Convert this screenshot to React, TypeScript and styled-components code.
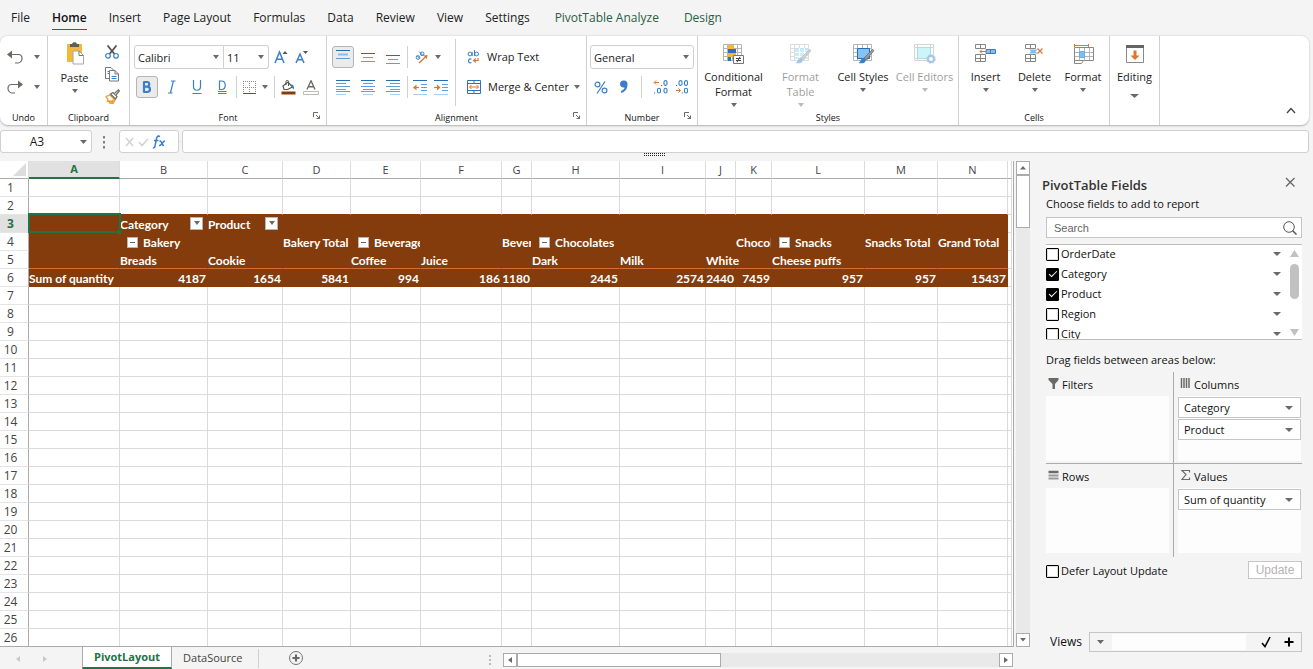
import React from "react";
import styled, { createGlobalStyle, css } from "styled-components";

const UI = '"Open Sans", "Noto Sans", sans-serif';
const BLUE = "#3a7fc8";
const ORANGE = "#dd7633";
const GRAY = "#6b6b66";
const GREEN = "#217346";
const BROWN = "#843c0c";
const LINE = "#d0d0d0";

const Global = createGlobalStyle`
  *, *::before, *::after { box-sizing: border-box; }
  body { margin: 0; background: #f4f4f4; overflow: hidden; }
  button, input, select { font-family: inherit; font-size: inherit; color: inherit; margin: 0; }
  button { padding: 0; border: 0; background: none; }
  svg { flex: none; }
`;

const Page = styled.div`
  display: flex;
  flex-direction: column;
  height: 100vh;
  font: 11px/16px ${UI};
  color: #1c1c1c;
  background: #f4f4f4;
`;

/* ---------- menu ---------- */
const Menu = styled.nav`
  display: flex;
  flex: none;
  height: 35px;
  padding: 7px 0 5px 11px;
  gap: 22px;
`;
const MenuLink = styled.a<{ $active?: boolean; $context?: boolean }>`
  font-size: 12px;
  line-height: 21px;
  height: 23px;
  white-space: nowrap;
  text-decoration: none;
  color: ${(p) => (p.$context ? "#29603f" : "#222")};
  ${(p) => p.$context && "margin-left: 3px;"}
  ${(p) => p.$active && css`font-weight: 600; border-bottom: 1px solid ${GREEN}; color: #111;`}
`;

/* ---------- ribbon ---------- */
const RibbonBar = styled.section`
  display: flex;
  flex: none;
  height: 90px;
  margin-right: 4px;
  background: #fff;
  border-top: 1px solid #e6e6e6;
  border-radius: 8px;
  box-shadow: 0 1px 2px rgba(0, 0, 0, 0.28);
`;
const GroupBox = styled.div<{ $w: number }>`
  display: flex;
  flex: none;
  flex-direction: column;
  width: ${(p) => p.$w}px;
  border-right: 1px solid ${LINE};
`;
const GroupBody = styled.div`
  display: flex;
  height: 74px;
`;
const GroupFoot = styled.div`
  display: grid;
  grid-template-columns: 1fr auto 1fr;
  height: 15px;
  font-size: 9px;
  line-height: 15px;
  color: #111;
`;
const Launcher = styled.button`
  grid-column: 3;
  justify-self: end;
  width: 12px;
  height: 12px;
  margin-right: 3px;
  line-height: 0;
`;
const Rows = styled.div<{ $pad?: number }>`
  display: flex;
  flex-direction: column;
  gap: 6px;
  padding: 9px 0 0 ${(p) => p.$pad ?? 0}px;
`;
const ToolRow = styled.div<{ $pad?: number }>`
  display: flex;
  align-items: center;
  height: 24px;
  gap: 3px;
  padding-left: ${(p) => p.$pad ?? 0}px;
`;
const Tool = styled.button<{ $w?: number; $on?: boolean; $gap?: number }>`
  display: flex;
  align-items: center;
  justify-content: center;
  gap: ${(p) => p.$gap ?? 5}px;
  flex: none;
  width: ${(p) => p.$w ?? 22}px;
  height: 22px;
  border: 1px solid ${(p) => (p.$on ? "#b5b5b5" : "transparent")};
  border-radius: 3px;
  background: ${(p) => (p.$on ? "#ebebeb" : "none")};
`;
const TextTool = styled.button`
  display: flex;
  align-items: center;
  gap: 7px;
  height: 22px;
  white-space: nowrap;
  & > span { margin-bottom: 1px; }
  & > svg:last-child:not(:first-child) { margin-left: -2px; }
`;
const Sep = styled.i<{ $h?: number; $m?: string }>`
  flex: none;
  width: 1px;
  height: ${(p) => p.$h ?? 22}px;
  margin: ${(p) => p.$m ?? 0};
  background: ${LINE};
`;
const Big = styled.button<{ $w: number; $off?: boolean; $push?: number; $top?: number }>`
  display: flex;
  flex: none;
  flex-direction: column;
  align-items: center;
  width: ${(p) => p.$w}px;
  padding-top: ${(p) => p.$top ?? 8}px;
  opacity: ${(p) => (p.$off ? 0.45 : 1)};
  line-height: 15px;
  & > span { margin: 5px 0 ${(p) => p.$push ?? 4}px; }
`;
const ClipCol = styled.div`
  display: flex;
  flex-direction: column;
  width: 24px;
  padding-top: 5px;
`;
const SelectBox = styled.div<{ $w: number; $side?: "l" | "r" }>`
  display: grid;
  width: ${(p) => p.$w}px;
  height: 24px;
  background: #fff;
  border: 1px solid #cfcfcf;
  border-radius: ${(p) => (p.$side === "l" ? "3px 0 0 3px" : p.$side === "r" ? "0 3px 3px 0" : "3px")};
  ${(p) => p.$side === "r" && "border-left: 0;"}
  & > * { grid-area: 1 / 1; }
  & > svg { place-self: center end; margin-right: 4px; pointer-events: none; }
`;
const Select = styled.select`
  appearance: none;
  width: 100%;
  border: 0;
  padding: 0 3px;
  background: transparent;
`;
const FontCombo = styled.div`
  display: flex;
`;
const Collapse = styled.button`
  align-self: flex-end;
  width: 20px;
  height: 24px;
  margin: 0 8px 4px auto;
`;

/* ---------- formula bar ---------- */
const FormulaRow = styled.div`
  display: flex;
  flex: none;
  align-items: center;
  height: 36px;
  padding: 0 4px 3px 0;
`;
const Framed = styled.div<{ $w?: number }>`
  display: flex;
  align-items: center;
  justify-content: space-between;
  flex: ${(p) => (p.$w ? "none" : "1")};
  width: ${(p) => (p.$w ? `${p.$w}px` : "auto")};
  height: 23px;
  background: #fff;
  border: 1px solid ${LINE};
  border-radius: 3px;
`;
const NameInput = styled.input`
  width: 72px;
  border: 0;
  background: none;
  text-align: center;
  font-size: 12px;
`;
const NameArrow = styled.span`
  display: flex;
  margin-right: 4px;
`;
const FormulaInput = styled.input`
  width: 100%;
  height: 100%;
  border: 0;
  background: none;
`;
const Splitter = styled.div`
  position: absolute;
  top: 153px;
  left: calc(50% - 13px);
  width: 21px;
  height: 4px;
  line-height: 0;
`;

/* ---------- work area ---------- */
const Main = styled.main`
  display: flex;
  flex: 1;
  min-height: 0;
`;
const Left = styled.div`
  display: flex;
  flex-direction: column;
  flex: 1;
  min-width: 0;
`;
const SheetRow = styled.div`
  display: flex;
  flex: 1;
  min-height: 0;
  gap: 2px;
`;
const Sheet = styled.div`
  flex: 1;
  min-width: 0;
  overflow: hidden;
  background: #fff;
  border-right: 1px solid #aaa;
  border-bottom: 1px solid #aaa;
  padding-right: 1px;
`;
const Grid = styled.table`
  table-layout: fixed;
  width: 100%;
  border-spacing: 0;
  border-collapse: separate;
`;
const ColHead = styled.th<{ $on?: boolean }>`
  height: 18px;
  padding: 0;
  font: ${(p) => (p.$on ? 700 : 400)} 11px/16px ${UI};
  color: ${(p) => (p.$on ? GREEN : "#444")};
  background: ${(p) => (p.$on ? "#e1e1e1" : "#fff")};
  border-right: 1px solid #dcdcdc;
  border-bottom: ${(p) => (p.$on ? `2px solid ${GREEN}` : "1px solid #ababab")};
`;
const RowHead = styled.th<{ $on?: boolean }>`
  height: 18px;
  padding: 1px 7px 0 0;
  font: ${(p) => (p.$on ? 700 : 400)} 12px/16px ${UI};
  color: ${(p) => (p.$on ? GREEN : "#444")};
  background: ${(p) => (p.$on ? "#e1e1e1" : "#fff")};
  border-right: 1px solid #ababab;
  border-bottom: 1px solid #e4e4e4;
`;
const Corner = styled.th`
  height: 18px;
  padding: 0 2px 2px 0;
  line-height: 0;
  text-align: right;
  vertical-align: bottom;
  border-right: 1px solid #dcdcdc;
  border-bottom: 1px solid #ababab;
`;
const Cell = styled.td<{ $pivot?: boolean; $above?: boolean; $rule?: boolean; $selected?: boolean }>`
  height: 18px;
  padding: 0;
  border-right: 1px solid #dadada;
  border-bottom: 1px solid #dadada;
  ${(p) => p.$selected && "position: relative;"}
  ${(p) => p.$above && `border-bottom-color: ${BROWN};`}
  ${(p) =>
    p.$pivot &&
    css`
      background: ${BROWN};
      color: #fff;
      border-color: ${BROWN};
      border-bottom-color: ${p.$rule ? "#d3702f" : BROWN};
      font: 700 12px/17px Lato, sans-serif;
    `}
`;
const CellText = styled.div<{ $right?: boolean; $clip?: boolean; $spread?: boolean }>`
  display: flex;
  align-items: center;
  height: 17px;
  padding: 2px 1px 0 0;
  white-space: nowrap;
  justify-content: ${(p) => (p.$right ? "flex-end" : p.$spread ? "space-between" : "flex-start")};
  overflow: ${(p) => (p.$clip ? "hidden" : "visible")};
`;
const FilterBtn = styled.button`
  display: flex;
  align-items: center;
  justify-content: center;
  flex: none;
  width: 13px;
  height: 13px;
  margin: 0 3px 3px 0;
  background: #fff;
  border: 1px solid #b5b5b5;
`;
const Toggle = styled.button`
  flex: none;
  width: 11px;
  height: 11px;
  margin: 0 5px 0 7px;
  background: #fff;
  border: 1px solid #b5b5b5;
  line-height: 0;
`;
const Selection = styled.div`
  position: absolute;
  inset: -2px -2px -1px -1px;
  border: 2px solid ${GREEN};
  z-index: 1;
  &::after {
    content: "";
    position: absolute;
    right: -2px;
    bottom: -3px;
    width: 5px;
    height: 5px;
    background: ${GREEN};
    border: solid ${BROWN};
    border-width: 1px 0 0 1px;
  }
`;

const Bar = styled.div<{ $vertical?: boolean }>`
  display: flex;
  flex: none;
  flex-direction: ${(p) => (p.$vertical ? "column" : "row")};
  justify-content: space-between;
  background: #e9e9e9;
  ${(p) => (p.$vertical ? "width: 14px;" : "width: 510px; height: 14px;")}
`;
const BarStart = styled.div<{ $vertical?: boolean }>`
  display: flex;
  flex-direction: ${(p) => (p.$vertical ? "column" : "row")};
`;
const BarBtn = styled.button`
  display: flex;
  align-items: center;
  justify-content: center;
  width: 14px;
  height: 14px;
  background: #fff;
  border: 1px solid #ababab;
`;
const Thumb = styled.div<{ $vertical?: boolean }>`
  ${(p) => (p.$vertical ? "width: 14px; height: 53px;" : "width: 204px; height: 14px;")}
  background: #fff;
  border: 1px solid #ababab;
`;

const TabStrip = styled.div`
  display: flex;
  flex: none;
  height: 22px;
  padding-right: 17px;
`;
const TabNav = styled.div`
  display: flex;
  gap: 21px;
  width: 82px;
  padding: 9px 0 0 15px;
`;
const SheetTab = styled.button<{ $on?: boolean }>`
  height: 22px;
  padding: 0 11px;
  font-size: 11px;
  line-height: 20px;
  color: #444;
  ${(p) =>
    p.$on &&
    css`
      font-weight: 700;
      color: ${GREEN};
      background: #fff;
      border: solid #ababab;
      border-width: 0 1px;
      border-bottom: 2px solid ${GREEN};
    `}
`;
const AddSheet = styled.button`
  width: 16px;
  height: 22px;
  padding-top: 3px;
  margin-left: 29px;
`;
const Grip = styled.div`
  margin: 8px 11px 0 auto;
  line-height: 0;
`;
const HBarWrap = styled.div`
  padding-top: 6px;
`;

/* ---------- field panel ---------- */
const Panel = styled.aside`
  display: flex;
  flex: none;
  flex-direction: column;
  width: 283px;
  padding: 14px 11px 17px 16px;
  color: #111;
`;
const PanelHead = styled.header`
  display: flex;
  justify-content: space-between;
  padding-right: 7px;
  margin-left: -4px;
`;
const PanelTitle = styled.h2`
  margin: 0;
  font-size: 13px;
  line-height: 21px;
  font-weight: 600;
  color: #333;
`;
const Note = styled.p<{ $top?: number }>`
  margin: ${(p) => p.$top ?? 0}px 0 0;
  line-height: 16px;
`;
const SearchBox = styled.label`
  display: flex;
  align-items: center;
  justify-content: space-between;
  height: 21px;
  margin: 5px 0 6px;
  padding: 0 4px 0 7px;
  background: #fff;
  border: 1px solid #c6c6c6;
`;
const SearchInput = styled.input`
  flex: 1;
  min-width: 0;
  padding: 0;
  border: 0;
  outline: 0;
  background: none;
  font: 11px/16px "Liberation Sans", sans-serif;
  &::placeholder { color: #666; opacity: 1; }
`;
const FieldBox = styled.div`
  display: flex;
  height: 96px;
  background: #fff;
  border: solid #bdbdbd;
  border-width: 1px 0;
`;
const FieldList = styled.ul`
  flex: 1;
  margin: 0;
  padding: 0;
  list-style: none;
  overflow: hidden;
`;
const Field = styled.li`
  display: flex;
  align-items: center;
  justify-content: space-between;
  height: 20px;
  padding: 0 6px 2px 0;
`;
const CheckLabel = styled.label`
  display: flex;
  align-items: center;
  gap: 2px;
`;
const Check = styled.input`
  appearance: none;
  display: grid;
  place-items: center;
  width: 13px;
  height: 13px;
  border: 1px solid #000;
  box-shadow: inset 0 0 0 1px #ddd;
  border-radius: 1px;
  background: #fff;
  &:checked { background: #000; box-shadow: none; }
  &:checked::after {
    content: "";
    width: 8px;
    height: 4px;
    border: solid #fff;
    border-width: 0 0 1px 1px;
    transform: translateY(-1px) rotate(-45deg);
  }
`;
const ListBar = styled.div`
  display: flex;
  flex-direction: column;
  align-items: center;
  justify-content: space-between;
  width: 15px;
  padding: 5px 0 3px;
`;
const ListThumb = styled.div`
  width: 9px;
  height: 35px;
  margin-bottom: 24px;
  border-radius: 5px;
  background: #c1c1c1;
`;
const Areas = styled.div`
  display: grid;
  grid-template-columns: 1fr 1fr;
  margin-top: 4px;
`;
const Area = styled.section<{ $right?: boolean; $bottom?: boolean }>`
  padding: 4px ${(p) => (p.$right ? 1 : 4)}px ${(p) => (p.$bottom ? 4 : 2)}px ${(p) => (p.$right ? 4 : 0)}px;
  ${(p) => !p.$right && "border-right: 1px solid #ababab;"}
  ${(p) => !p.$bottom && "border-bottom: 1px solid #ababab;"}
`;
const AreaHead = styled.h3`
  display: flex;
  gap: 3px;
  height: 20px;
  margin: 0;
  padding-left: 2px;
  font-size: 11px;
  line-height: 17px;
  font-weight: 400;
`;
const Drop = styled.div`
  display: flex;
  flex-direction: column;
  gap: 1px;
  height: 65px;
  padding-top: 1px;
  background: #fdfdfd;
`;
const Chip = styled.button`
  display: flex;
  align-items: center;
  justify-content: space-between;
  height: 21px;
  padding: 0 7px 0 5px;
  background: #fff;
  border: 1px solid #c6c6c6;
`;
const DeferRow = styled.div`
  display: flex;
  align-items: flex-start;
  justify-content: space-between;
  padding-top: 4px;
  & > label { height: 20px; }
`;
const Update = styled.button`
  width: 54px;
  height: 18px;
  border: 1px solid #c6c6c6;
  background: #fff;
  color: #b4b4b4;
  font: 12px/14px "Liberation Sans", sans-serif;
`;
const ViewsRow = styled.div`
  display: flex;
  align-items: center;
  gap: 7px;
  margin-top: auto;
  padding-left: 4px;
  font-size: 12px;
`;
const ViewsBox = styled.div`
  display: flex;
  align-items: center;
  flex: 1;
  min-width: 0;
  height: 20px;
  border: 1px solid #c6c6c6;
`;
const ViewsInput = styled.input`
  flex: 1;
  width: 0;
  height: 16px;
  margin-right: 9px;
  border: 0;
  background: #fdfdfd;
`;

/* ---------- icons ---------- */
type IconProps = { w?: number; h?: number; children: React.ReactNode };
const Icon = ({ w = 16, h = w, children }: IconProps) => (
  <svg width={w} height={h} viewBox={`0 0 ${w} ${h}`} fill="none" aria-hidden="true">{children}</svg>
);
const Down = ({ w = 6, c = GRAY }: { w?: number; c?: string }) => (
  <Icon w={w} h={4}><path d={`M0 0H${w}L${w / 2} 4Z`} fill={c} /></Icon>
);
const Bars = ({ y, side, block }: { y: number[]; side?: "l" | "c" | "r"; block?: boolean }) => (
  <Icon w={14} h={16}>
    {y.map((v, i) => {
      const short = i % 2 === 1;
      const a = short ? (side === "l" ? 0 : side === "r" ? 4 : 2) : 0;
      const b = short ? (side === "l" ? 10 : side === "r" ? 14 : 12) : 14;
      const wide = block && short;
      return (
        <path
          key={v}
          d={`M${a} ${v + 0.5}H${b}`}
          strokeWidth={wide ? 2 : 1}
          stroke={wide ? "#8cbdec" : i === 0 ? "#1f6fb5" : i === 5 ? "#a9cdef" : "#5d9edb"}
        />
      );
    })}
  </Icon>
);
const UndoIcon = ({ flip }: { flip?: boolean }) => (
  <Icon w={16} h={14}>
    <g transform={flip ? "matrix(-1 0 0 1 16 0)" : undefined}>
      <path d="M2 4.500H11.500C14 4.500 15 6.500 15 8.500S13.500 13 11 13H8" stroke={GRAY} strokeWidth="1.200" />
      <path d="M0 4.500L5 0.500V8.500Z" fill={GRAY} />
    </g>
  </Icon>
);
const PasteIcon = () => (
  <Icon w={20} h={24}>
    <path d="M2 3H17V21H2Z" fill="#f3b73b" />
    <path d="M5 5V3H7C7.500 0.500 11.500 0.500 12 3H14V6H5Z" fill="#5f5f5a" />
    <path d="M8 10H14L18.500 14.500V23H8Z" fill="#fff" stroke="#a6a6a6" />
    <path d="M14 10V14.500H18.500" stroke="#777" />
  </Icon>
);
const CutIcon = () => (
  <Icon w={14} h={14}>
    <path d="M2.500 0.500L9.500 9M11.500 0.500L4.500 9" stroke="#55554f" strokeWidth="1.800" />
    <circle cx="3" cy="10.800" r="2.300" stroke={BLUE} strokeWidth="1.200" />
    <circle cx="11" cy="10.800" r="2.300" stroke={BLUE} strokeWidth="1.200" />
  </Icon>
);
const CopyIcon = () => (
  <Icon w={14} h={15}>
    <path d="M4 11.500H0.500V0.500H6L8.500 3" stroke="#777" />
    <path d="M4.500 3.500H10L13.500 7V14H4.500Z" fill="#fff" stroke="#777" />
    <path d="M10 3.500V7H13.500" stroke="#777" />
    <path d="M6.500 9.500H11.500M6.500 11.500H11.500M2.500 4.500H4M2.500 6.500H4" stroke={BLUE} />
  </Icon>
);
const PainterIcon = () => (
  <Icon w={15} h={15}>
    <path d="M1 7.500L5 6L10 11L8 14.500L4.500 14L5 12L2.500 12.500L3 10.500Z" fill="#fff" stroke="#eb9a2d" strokeWidth="1.300" />
    <path d="M4 13L9 10L8 14Z" fill="#eb9a2d" />
    <path d="M5.500 5L8 3.500L12 7.500L10.500 10Z" fill="#fff" stroke={GRAY} strokeWidth="1.200" />
    <path d="M9.500 4.500L13.500 0.800L14.500 2L11 6" fill="#fff" stroke={GRAY} strokeWidth="1.200" />
  </Icon>
);
const GrowIcon = ({ down }: { down?: boolean }) => (
  <Icon w={14} h={14}>
    <path d={down ? "M1 13L5 4L9 13M2.500 9.800H7.500" : "M1 13L5.500 2L10 13M2.500 9.300H8.500"} stroke={BLUE} strokeWidth="1.500" />
    <path d={down ? "M8 1H13L10.500 4Z" : "M8.500 4H13.500L11 1Z"} fill="#55554f" />
  </Icon>
);
const BoldIcon = () => (
  <Icon w={12} h={14}><path d="M2.500 2H6C9 2 9 6.700 6 6.700H2.500M6 6.700C10 6.700 10 12 6 12H2.500M3 1.500V12.500" stroke={BLUE} strokeWidth="2.200" /></Icon>
);
const ItalicIcon = () => (
  <Icon w={10} h={14}><path d="M4 1H8.500M1 13H5.500M6.400 1L3.400 13" stroke={BLUE} strokeWidth="1.200" /></Icon>
);
const UnderIcon = () => (
  <Icon w={12} h={14}><path d="M2.500 0V6.500C2.500 11.500 9.500 11.500 9.500 6.500V0M1.500 13.500H10.500" stroke={BLUE} strokeWidth="1.200" /></Icon>
);
const DoubleIcon = () => (
  <Icon w={12} h={15}><path d="M3.500 1V9.500H5.500C10.500 9.500 10.500 1 5.500 1ZM2 11.500H10.500M2 13.500H10.500" stroke={BLUE} strokeWidth="1.200" /></Icon>
);
const BorderIcon = () => (
  <Icon w={13} h={13}>
    <path d="M0.500 0V11M6.500 0V11M12.500 0V11M0 0.500H13M0 6.500H13" stroke="#8a8a86" strokeDasharray="1 1" />
    <path d="M0 12.500H13" stroke="#55554f" />
  </Icon>
);
const FillIcon = () => (
  <Icon w={15} h={15}>
    <path d="M2 6L7 2L11.500 7L6.500 9.500L3 9.500Z" stroke="#55554f" strokeWidth="1.200" />
    <path d="M5 5V1.500C5 0 7.500 0 7.500 1.500V6" stroke="#55554f" />
    <path d="M9.500 4.500C12 4 13.500 6 13 9.500L11.300 8Z" fill={BLUE} />
    <path d="M0.500 11.500H14.500V14.500H0.500Z" fill={BROWN} />
  </Icon>
);
const ColorIcon = () => (
  <Icon w={16} h={15}>
    <path d="M4 9.500L8 0.800L12 9.500M5.300 6.700H10.700" stroke={GRAY} strokeWidth="1.400" />
    <path d="M0.500 11.500H15.500V14.500H0.500Z" fill="#fff" stroke="#bbb" />
  </Icon>
);
const OrientIcon = () => (
  <Icon w={13} h={13}>
    <circle cx="3" cy="6.500" r="1.800" stroke={BLUE} />
    <path d="M2 4.500L5 7.800M4 0.500L8.500 5" stroke={BLUE} />
    <circle cx="7.200" cy="2.800" r="1.800" stroke={BLUE} />
    <path d="M4 12L11.500 5" stroke={ORANGE} strokeWidth="1.300" />
    <path d="M8.500 4.500L12.500 4L12 8Z" fill={ORANGE} />
  </Icon>
);
const IndentIcon = ({ right }: { right?: boolean }) => (
  <Icon w={14} h={16}>
    <path d="M0 1.500H14" stroke="#1f6fb5" />
    <path d="M8 5.500H14M8 8.500H14M8 11.500H14" stroke="#5d9edb" />
    <path d="M0 15.500H14" stroke="#a9cdef" />
    <path d={right ? "M0 8.500H4" : "M2 8.500H6"} stroke={ORANGE} strokeWidth="1.200" />
    <path d={right ? "M3 5.500L6.500 8.500L3 11.500Z" : "M3.500 5.500L0 8.500L3.500 11.500Z"} fill={ORANGE} />
  </Icon>
);
const WrapIcon = () => (
  <Icon w={13} h={14}>
    <circle cx="3" cy="4" r="1.900" stroke={BLUE} /><path d="M5.200 2V6" stroke={BLUE} />
    <path d="M7.500 0V6" stroke={BLUE} /><circle cx="9.600" cy="4" r="1.900" stroke={BLUE} />
    <path d="M4.500 9.200C0.500 7.500 0.500 14.300 4.500 12.500" stroke={BLUE} strokeWidth="1.200" />
    <path d="M11 8V10.500H7M9 8.500L6.500 10.500L9 12.500" stroke={ORANGE} strokeWidth="1.200" />
  </Icon>
);
const MergeIcon = () => (
  <Icon w={14} h={14}>
    <path d="M0.500 0.500H13.500V13.500H0.500ZM0 3.500H14M0 10.500H14M7 0V3M7 11V14" stroke="#2c72b4" />
    <path d="M2.500 7H11.500M4.500 5L2.500 7L4.500 9M9.500 5L11.500 7L9.500 9" stroke={ORANGE} />
  </Icon>
);
const PercentIcon = () => (
  <Icon w={14} h={13}>
    <circle cx="3.500" cy="3.500" r="2.400" stroke={BLUE} strokeWidth="1.200" /><circle cx="10.500" cy="9.500" r="2.400" stroke={BLUE} strokeWidth="1.200" />
    <path d="M11 0.500L3 12.500" stroke={BLUE} strokeWidth="1.200" />
  </Icon>
);
const CommaIcon = () => (
  <Icon w={10} h={14}><path d="M1 4A3.700 3.700 0 1 1 8.500 4.500C8.500 9 6 12 2 13V11C4.500 10 5.500 8.700 5.500 7.500C3 8 1 6.500 1 4Z" fill={BLUE} /></Icon>
);
const DecimalIcon = ({ less }: { less?: boolean }) => (
  <Icon w={15} h={14}>
    <g stroke={BLUE} strokeWidth="1.100">
      {less ? (
        <><rect x="4" y="0.600" width="3" height="4.800" rx="1.500" /><rect x="9.500" y="0.600" width="3" height="4.800" rx="1.500" /><rect x="9.500" y="8.200" width="3" height="4.800" rx="1.500" /><path d="M1 5.500H2.200M6.700 13H7.900" /></>
      ) : (
        <><rect x="11" y="0.600" width="3" height="4.800" rx="1.500" /><rect x="4.500" y="8.200" width="3" height="4.800" rx="1.500" /><rect x="11" y="8.200" width="3" height="4.800" rx="1.500" /><path d="M8 5.500H9.200M1 13H2.200" /></>
      )}
    </g>
    <path d={less ? "M1 10.500H5M3.500 8.500L5.500 10.500L3.500 12.500" : "M1.500 2.500H6M3 0.500L1 2.500L3 4.500"} stroke={ORANGE} />
  </Icon>
);
const Lattice = () => (
  <path d="M0.500 0.500H18.500V16.500H0.500ZM0 4.500H19M0 8.500H19M0 12.500H19M4.500 0V17M9.500 0V17M14.500 0V17" stroke="#b4b4b1" />
);
const Brush = () => (
  <>
    <path d="M11 14L19.500 5.500L21 6.500L13 16Z" fill="#9a9a96" stroke={GRAY} strokeWidth="0.800" />
    <path d="M5.500 19C8 18 7.500 14.500 10.500 14C13 14 13.500 17 11.500 18.500C10 19.500 7.500 19.500 5.500 19Z" fill={BLUE} />
  </>
);
const ConditionalIcon = () => (
  <Icon w={21} h={20}>
    <Lattice />
    <path d="M5 1H11V5H5ZM5 9H13V13H5Z" fill="#f3b73b" /><path d="M5 5H13V9H5ZM5 13H8V17H5Z" fill="#2c72b4" />
    <path d="M10.500 11.500H20.500V19.500H10.500Z" fill="#fff" stroke="#777" />
    <path d="M13 14.500H18M13 16.500H18M17 12.800L14 18.200" stroke="#444" />
  </Icon>
);
const FormatTableIcon = () => (
  <Icon w={21} h={20}><Lattice /><path d="M5 4H18V15H5Z" fill="#5cc7ee" opacity="0.700" /><path d="M5 8.500H18M5 12.500H18M9.500 4V15M14.500 4V15" stroke="#fff" /><Brush /></Icon>
);
const CellStylesIcon = () => (
  <Icon w={21} h={20}><Lattice /><path d="M4.500 4.500H16.500V14.500H4.500Z" fill="#83c3f7" stroke="#1f6fb5" /><Brush /></Icon>
);
const CellEditorsIcon = () => (
  <Icon w={22} h={20}>
    <path d="M0.500 0.500H19.500V16.500H0.500ZM0 3.500H20M0 14.500H20M3.500 0V17M16.500 0V17" stroke="#a3a3a0" />
    <path d="M3.500 3.500H16.500V14.500H3.500Z" fill="#8de9f2" stroke="#4ab8cc" />
    <circle cx="17" cy="15" r="3" fill="#fff" stroke={BLUE} strokeWidth="2" /><circle cx="17" cy="15" r="4.300" stroke={BLUE} strokeDasharray="1.700 1.700" />
  </Icon>
);
const CellsBase = () => (
  <path d="M0.500 0.500H10.500V4.500H0.500ZM5.500 0V5M0.500 10.500H10.500V17.500H0.500ZM5.500 10V18M0 14.500H11" stroke="#858581" />
);
const InsertIcon = () => (
  <Icon w={21} h={20}>
    <CellsBase />
    <path d="M11 5.500H20.500V9.500H11ZM15.500 5.500V9.500" fill="#7dbff5" stroke={BLUE} />
    <path d="M5 7.500H11M7 5.500L5 7.500L7 9.500" stroke={ORANGE} />
  </Icon>
);
const DeleteIcon = () => (
  <Icon w={19} h={20}>
    <CellsBase />
    <path d="M4 5.500H13L10.500 7.500L13 9.500H4L6 7.500Z" fill="#7dbff5" />
    <path d="M12.500 4.500L17.500 9.500M17.500 4.500L12.500 9.500" stroke={ORANGE} strokeWidth="1.200" />
  </Icon>
);
const FormatIcon = () => (
  <Icon w={21} h={20}>
    <path d="M1 1.500H16M1.500 0V3M15.500 0V3" stroke={ORANGE} />
    <path d="M6.500 4V17M11.500 4V17M16.500 4V17M1 8.500H21M1 12.500H21" stroke="#b4b4b1" />
    <path d="M1.500 3.500H20.500V16.500H10.500L8.500 19.500H1.500ZM1 16.500H10" stroke="#888884" />
    <path d="M6.500 7.500H11.500V13.500H6.500Z" fill="#7dbff5" stroke="#65aeea" />
  </Icon>
);
const EditingIcon = () => (
  <Icon w={18} h={20}>
    <path d="M0.500 1.500H17.500V18.500H0.500Z" stroke="#8a8a86" /><path d="M0 1H18V4H0Z" fill="#66665f" />
    <path d="M7.500 6.500H10.500V11.500H13.500L9 16L4.500 11.500H7.500Z" fill={ORANGE} />
  </Icon>
);
const LauncherIcon = () => (
  <Icon w={8} h={8}><path d="M0.500 5V0.500H5M3 3L6.500 6.500M6.500 3.500V6.500H3.500" stroke={GRAY} /></Icon>
);

/* ---------- data ---------- */
const menu = ["File", "Home", "Insert", "Page Layout", "Formulas", "Data", "Review", "View", "Settings", "PivotTable Analyze", "Design"];
const cols: [string, number][] = [
  ["A", 91], ["B", 88], ["C", 75], ["D", 68], ["E", 70], ["F", 81], ["G", 30],
  ["H", 88], ["I", 86], ["J", 30], ["K", 36], ["L", 93], ["M", 73], ["N", 70],
];
type Item = { t: string; kind?: "filter" | "toggle" | "num" | "clip" };
const pivot: Record<number, Record<string, Item>> = {
  3: { B: { t: "Category", kind: "filter" }, C: { t: "Product", kind: "filter" } },
  4: {
    B: { t: "Bakery", kind: "toggle" }, D: { t: "Bakery Total", kind: "clip" }, E: { t: "Beverages", kind: "toggle" },
    G: { t: "Bever", kind: "clip" }, H: { t: "Chocolates", kind: "toggle" }, K: { t: "Chocol", kind: "clip" },
    L: { t: "Snacks", kind: "toggle" }, M: { t: "Snacks Total" }, N: { t: "Grand Total" },
  },
  5: { B: { t: "Breads" }, C: { t: "Cookie" }, E: { t: "Coffee" }, F: { t: "Juice" }, H: { t: "Dark" }, I: { t: "Milk" }, J: { t: "White" }, L: { t: "Cheese puffs" } },
  6: { A: { t: "Sum of quantity" } },
};
["4187", "1654", "5841", "994", "186", "1180", "2445", "2574", "2440", "7459", "957", "957", "15437"].forEach((t, i) => {
  pivot[6][cols[i + 1][0]] = { t, kind: "num" };
});
const fields: [string, boolean][] = [["OrderDate", false], ["Category", true], ["Product", true], ["Region", false], ["City", false]];

/* ---------- parts ---------- */
const Group = ({ w, label, launch, children }: { w: number; label?: string; launch?: boolean; children: React.ReactNode }) => (
  <GroupBox $w={w}>
    <GroupBody>{children}</GroupBody>
    <GroupFoot>
      <span />
      <span>{label}</span>
      {launch && <Launcher aria-label={`${label} settings`}><LauncherIcon /></Launcher>}
    </GroupFoot>
  </GroupBox>
);

const Ribbon = () => (
  <RibbonBar>
    <Group w={48} label="Undo">
      <Rows $pad={5}>
        <ToolRow><Tool $w={36} $gap={11} aria-label="Undo"><UndoIcon /><Down /></Tool></ToolRow>
        <ToolRow><Tool $w={36} $gap={11} aria-label="Redo"><UndoIcon flip /><Down /></Tool></ToolRow>
      </Rows>
    </Group>
    <Group w={82} label="Clipboard">
      <Big $w={53} $top={5}><PasteIcon /><span>Paste</span><Down /></Big>
      <ClipCol>
        <Tool aria-label="Cut"><CutIcon /></Tool>
        <Tool aria-label="Copy"><CopyIcon /></Tool>
        <Tool aria-label="Format painter"><PainterIcon /></Tool>
      </ClipCol>
    </Group>
    <Group w={197} label="Font" launch>
      <Rows $pad={4}>
        <ToolRow>
          <FontCombo>
            <SelectBox $w={90} $side="l"><Select aria-label="Font name"><option>Calibri</option></Select><Down /></SelectBox>
            <SelectBox $w={45} $side="r"><Select aria-label="Font size"><option>11</option></Select><Down /></SelectBox>
          </FontCombo>
          <Tool $w={18} aria-label="Increase font size"><GrowIcon /></Tool>
          <Tool $w={18} aria-label="Decrease font size"><GrowIcon down /></Tool>
        </ToolRow>
        <ToolRow $pad={2}>
          <Tool $on aria-label="Bold"><BoldIcon /></Tool>
          <Tool aria-label="Italic"><ItalicIcon /></Tool>
          <Tool aria-label="Underline"><UnderIcon /></Tool>
          <Tool aria-label="Double underline"><DoubleIcon /></Tool>
          <Sep />
          <Tool $w={31} $gap={6} aria-label="Borders"><BorderIcon /><Down /></Tool>
          <Sep />
          <Tool $w={20} aria-label="Fill color"><FillIcon /></Tool>
          <Tool $w={20} aria-label="Font color"><ColorIcon /></Tool>
        </ToolRow>
      </Rows>
    </Group>
    <Group w={260} label="Alignment" launch>
      <Rows $pad={5}>
        <ToolRow>
          <Tool $on aria-label="Top align"><Bars block y={[1, 5, 9]} /></Tool>
          <Tool aria-label="Middle align"><Bars y={[4, 8, 12]} /></Tool>
          <Tool aria-label="Bottom align"><Bars y={[6, 10, 14]} /></Tool>
          <Sep />
          <Tool $w={34} $gap={7} aria-label="Orientation"><OrientIcon /><Down /></Tool>
        </ToolRow>
        <ToolRow>
          <Tool aria-label="Align left"><Bars side="l" y={[1, 4, 7, 10, 12, 15]} /></Tool>
          <Tool aria-label="Align center"><Bars side="c" y={[1, 4, 7, 10, 12, 15]} /></Tool>
          <Tool aria-label="Align right"><Bars side="r" y={[1, 4, 7, 10, 12, 15]} /></Tool>
          <Sep />
          <Tool $w={18} aria-label="Decrease indent"><IndentIcon /></Tool>
          <Tool $w={18} aria-label="Increase indent"><IndentIcon right /></Tool>
        </ToolRow>
      </Rows>
      <Sep $h={67} $m="3px 0 0 5px" />
      <Rows $pad={11}>
        <ToolRow><TextTool><WrapIcon /><span>Wrap Text</span></TextTool></ToolRow>
        <ToolRow><TextTool><MergeIcon /><span>Merge &amp; Center</span><Down /></TextTool></ToolRow>
      </Rows>
    </Group>
    <Group w={111} label="Number" launch>
      <Rows $pad={3}>
        <SelectBox $w={104}><Select aria-label="Number format"><option>General</option></Select><Down /></SelectBox>
        <ToolRow>
          <Tool $w={22} aria-label="Percent"><PercentIcon /></Tool>
          <Tool $w={18} aria-label="Comma"><CommaIcon /></Tool>
          <Sep $m="0 5px" />
          <Tool $w={20} aria-label="Increase decimals"><DecimalIcon /></Tool>
          <Tool $w={18} aria-label="Decrease decimals"><DecimalIcon less /></Tool>
        </ToolRow>
      </Rows>
    </Group>
    <Group w={261} label="Styles">
      <Big $w={71}><ConditionalIcon /><span>Conditional<br />Format</span><Down /></Big>
      <Big $w={63} $off disabled><FormatTableIcon /><span>Format<br />Table</span><Down /></Big>
      <Big $w={62}><CellStylesIcon /><span>Cell Styles</span><Down /></Big>
      <Big $w={61} $off disabled><CellEditorsIcon /><span>Cell Editors</span><Down /></Big>
    </Group>
    <Group w={151} label="Cells">
      <Big $w={53}><InsertIcon /><span>Insert</span><Down /></Big>
      <Big $w={45}><DeleteIcon /><span>Delete</span><Down /></Big>
      <Big $w={52}><FormatIcon /><span>Format</span><Down /></Big>
    </Group>
    <Group w={50}>
      <Big $w={49} $push={10}><EditingIcon /><span>Editing</span><Down w={9} /></Big>
    </Group>
    <Collapse aria-label="Collapse ribbon"><Icon w={10} h={7}><path d="M1 6L5 1.500L9 6" stroke="#444" strokeWidth="1.300" /></Icon></Collapse>
  </RibbonBar>
);

const FormulaBar = () => (
  <FormulaRow>
    <Framed $w={92}><NameInput aria-label="Cell name" defaultValue="A3" /><NameArrow><Down w={7} /></NameArrow></Framed>
    <Icon w={27} h={16}><path d="M11 2H13V4.500H11ZM11 7H13V9.500H11ZM11 12H13V14.500H11Z" fill="#808080" /></Icon>
    <Framed $w={60}>
      <Icon w={58} h={16}>
        <path d="M6 4L13 12M13 4L6 12" stroke="#d2d2d2" strokeWidth="1.500" />
        <path d="M19 8L22 11.500L28 5" stroke="#d2d2d2" strokeWidth="1.500" />
        <path d="M40 2.500C37 1 36.500 4 36 7L35 12C34.500 14 33.500 14 33 13.500M34 6.500H38.500" stroke={BLUE} strokeWidth="1.500" />
        <path d="M39.500 7.500C42 5.500 41.500 12 44 11.500M45 7C43 6.500 41.500 12.500 39 11.500" stroke={BLUE} strokeWidth="1.500" />
      </Icon>
    </Framed>
    <Sep $h={1} $m="0 1px" />
    <Framed><FormulaInput aria-label="Formula" /></Framed>
    <Splitter><Icon w={21} h={4}><path d="M0 0.500H21M0 2.500H21" stroke="#222" strokeDasharray="1 1" /></Icon></Splitter>
  </FormulaRow>
);

const Content = ({ item }: { item: Item }) => (
  <CellText $right={item.kind === "num"} $spread={item.kind === "filter"} $clip={item.kind === "clip" || item.kind === "toggle"}>
    {item.kind === "toggle" && <Toggle aria-label={`Collapse ${item.t}`}><Icon w={9}><path d="M2 4.500H7" stroke="#666" /></Icon></Toggle>}
    <span>{item.t}</span>
    {item.kind === "filter" && <FilterBtn aria-label={`Filter ${item.t}`}><Down /></FilterBtn>}
  </CellText>
);

const SheetGrid = () => (
  <Grid>
    <colgroup>
      <col width={29} />
      {cols.map(([n, w]) => <col key={n} width={w} />)}
      <col />
    </colgroup>
    <thead>
      <tr>
        <Corner><Icon w={13}><path d="M13 0V13H0Z" fill="#dcdcdc" /></Icon></Corner>
        {cols.map(([n]) => <ColHead key={n} $on={n === "A"}>{n}</ColHead>)}
        <ColHead />
      </tr>
    </thead>
    <tbody>
      {Array.from({ length: 26 }, (_, i) => i + 1).map((r) => (
        <tr key={r}>
          <RowHead $on={r === 3}>{r}</RowHead>
          {cols.map(([n]) => {
            const selected = r === 3 && n === "A";
            return (
              <Cell key={n} $pivot={r >= 3 && r <= 6} $above={r === 2} $rule={r === 5} $selected={selected}>
                {pivot[r]?.[n] && <Content item={pivot[r][n]} />}
                {selected && <Selection />}
              </Cell>
            );
          })}
          <Cell />
        </tr>
      ))}
    </tbody>
  </Grid>
);

const Tri = ({ d, c = GRAY }: { d: string; c?: string }) => <Icon w={6}><path d={d} fill={c} /></Icon>;

const SheetTabs = () => (
  <TabStrip>
    <TabNav><Tri c="#c8c8c8" d="M5 0V6L1 3Z" /><Tri c="#c8c8c8" d="M1 0V6L5 3Z" /></TabNav>
    <SheetTab $on>PivotLayout</SheetTab>
    <SheetTab>DataSource</SheetTab>
    <Sep $h={19} $m="2px 0 0 4px" />
    <AddSheet aria-label="Add sheet"><Icon w={16}><circle cx="8" cy="8" r="6.500" stroke="#777" /><path d="M8 4.500V11.500M4.500 8H11.500" stroke="#666" strokeWidth="2" /></Icon></AddSheet>
    <Grip><Icon w={3} h={10}><path d="M0 0H2V2H0ZM0 4H2V6H0ZM0 8H2V10H0Z" fill="#bbb" /></Icon></Grip>
    <HBarWrap>
      <Bar>
        <BarStart><BarBtn aria-label="Scroll left"><Tri d="M5 0V6L1 3Z" /></BarBtn><Thumb /></BarStart>
        <BarBtn aria-label="Scroll right"><Tri d="M1 0V6L5 3Z" /></BarBtn>
      </Bar>
    </HBarWrap>
  </TabStrip>
);

type DropAreaProps = { title: string; icon: React.ReactNode; items?: string[]; right?: boolean; bottom?: boolean };
const DropArea = ({ title, icon, items = [], right, bottom }: DropAreaProps) => (
  <Area $right={right} $bottom={bottom}>
    <AreaHead>{icon}{title}</AreaHead>
    <Drop>{items.map((t) => <Chip key={t}>{t}<Down w={8} /></Chip>)}</Drop>
  </Area>
);

const FieldPanel = () => (
  <Panel>
    <PanelHead>
      <PanelTitle>PivotTable Fields</PanelTitle>
      <button aria-label="Close"><Icon w={10} h={15}><path d="M1 1L9.500 9.500M9.500 1L1 9.500" stroke="#666" strokeWidth="1.300" /></Icon></button>
    </PanelHead>
    <Note>Choose fields to add to report</Note>
    <SearchBox>
      <SearchInput placeholder="Search" aria-label="Search fields" />
      <Icon w={14}><circle cx="6" cy="6" r="5.300" stroke="#555" /><path d="M9.500 9.500L13.500 13.500" stroke="#555" strokeWidth="1.500" /></Icon>
    </SearchBox>
    <FieldBox>
      <FieldList>
        {fields.map(([t, on]) => (
          <Field key={t}><CheckLabel><Check type="checkbox" defaultChecked={on} />{t}</CheckLabel><Down w={8} /></Field>
        ))}
      </FieldList>
      <ListBar>
        <Icon w={9} h={7}><path d="M4.500 0L9 7H0Z" fill="#c1c1c1" /></Icon>
        <ListThumb />
        <Icon w={9} h={7}><path d="M4.500 7L9 0H0Z" fill="#c1c1c1" /></Icon>
      </ListBar>
    </FieldBox>
    <Note $top={12}>Drag fields between areas below:</Note>
    <Areas>
      <DropArea title="Filters" icon={<Icon w={11} h={15}><path d="M0.500 2H10.500V4L7 8V13H4.500V8L0.500 4Z" fill={GRAY} /></Icon>} />
      <DropArea right title="Columns" items={["Category", "Product"]} icon={<Icon w={11} h={14}><path d="M1.500 2V12M4 2V12M6.500 2V12M9 2V12" stroke={GRAY} strokeWidth="1.500" /></Icon>} />
      <DropArea bottom title="Rows" icon={<Icon w={11} h={14}><path d="M0.500 4H10.500" stroke={GRAY} strokeWidth="2.500" /><path d="M0.500 7.500H10.500M0.500 10.500H10.500" stroke="#999" strokeWidth="2" /></Icon>} />
      <DropArea right bottom title="Values" items={["Sum of quantity"]} icon={<Icon w={11} h={14}><path d="M9.500 4.500V2.500H2L6 6.500L2 11.500H9.500V9.500" stroke={GRAY} strokeWidth="1.200" /></Icon>} />
    </Areas>
    <DeferRow>
      <CheckLabel><Check type="checkbox" />Defer Layout Update</CheckLabel>
      <Update disabled>Update</Update>
    </DeferRow>
    <ViewsRow>
      <span>Views</span>
      <ViewsBox>
        <Tool aria-label="Choose view"><Down w={7} /></Tool>
        <ViewsInput aria-label="View name" />
        <Tool aria-label="Apply view"><Icon w={11} h={12}><path d="M1 7L4 10.500L9 1" stroke="#000" strokeWidth="1.600" /></Icon></Tool>
        <Tool $w={24} aria-label="Add view"><Icon w={10}><path d="M5 0.500V9.500M0.500 5H9.500" stroke="#000" strokeWidth="2" /></Icon></Tool>
      </ViewsBox>
    </ViewsRow>
  </Panel>
);

export default function App() {
  return (
    <Page>
      <Global />
      <Menu>
        {menu.map((m, i) => <MenuLink key={m} href="#" $active={m === "Home"} $context={i > 8}>{m}</MenuLink>)}
      </Menu>
      <Ribbon />
      <FormulaBar />
      <Main>
        <Left>
          <SheetRow>
            <Sheet><SheetGrid /></Sheet>
            <Bar $vertical>
              <BarStart $vertical><BarBtn aria-label="Scroll up"><Tri d="M0 4.500H6L3 1Z" /></BarBtn><Thumb $vertical /></BarStart>
              <BarBtn aria-label="Scroll down"><Tri d="M0 1H6L3 4.500Z" /></BarBtn>
            </Bar>
          </SheetRow>
          <SheetTabs />
        </Left>
        <FieldPanel />
      </Main>
    </Page>
  );
}
